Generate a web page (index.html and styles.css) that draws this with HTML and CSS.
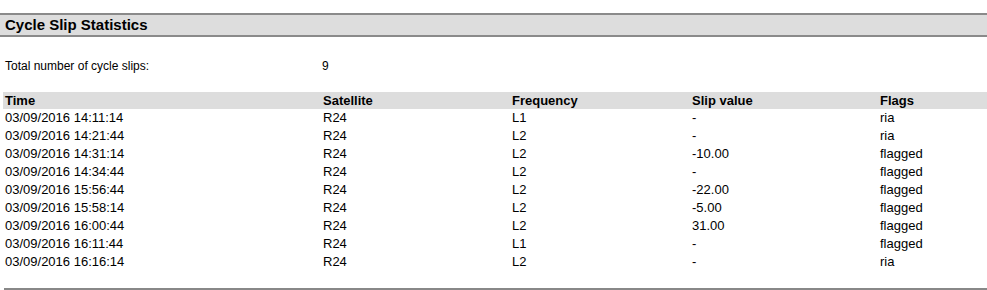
FILE: index.html
```html
<!DOCTYPE html>
<html>
<head>
<meta charset="utf-8">
<link rel="stylesheet" href="styles.css">
</head>
<body>
<h2 class="section-title">Cycle Slip Statistics</h2>
<div class="summary">
  <span class="summary-label">Total number of cycle slips:</span>
  <span class="summary-value">9</span>
</div>
<table class="slips">
  <colgroup>
    <col class="c-time"><col class="c-sat"><col class="c-freq"><col class="c-slip"><col class="c-flags">
  </colgroup>
  <thead>
    <tr><th>Time</th><th>Satellite</th><th>Frequency</th><th>Slip value</th><th>Flags</th></tr>
  </thead>
  <tbody>
    <tr><td>03/09/2016 14:11:14</td><td>R24</td><td>L1</td><td>-</td><td>ria</td></tr>
    <tr><td>03/09/2016 14:21:44</td><td>R24</td><td>L2</td><td>-</td><td>ria</td></tr>
    <tr><td>03/09/2016 14:31:14</td><td>R24</td><td>L2</td><td>-10.00</td><td>flagged</td></tr>
    <tr><td>03/09/2016 14:34:44</td><td>R24</td><td>L2</td><td>-</td><td>flagged</td></tr>
    <tr><td>03/09/2016 15:56:44</td><td>R24</td><td>L2</td><td>-22.00</td><td>flagged</td></tr>
    <tr><td>03/09/2016 15:58:14</td><td>R24</td><td>L2</td><td>-5.00</td><td>flagged</td></tr>
    <tr><td>03/09/2016 16:00:44</td><td>R24</td><td>L2</td><td>31.00</td><td>flagged</td></tr>
    <tr><td>03/09/2016 16:11:44</td><td>R24</td><td>L1</td><td>-</td><td>flagged</td></tr>
    <tr><td>03/09/2016 16:16:14</td><td>R24</td><td>L2</td><td>-</td><td>ria</td></tr>
  </tbody>
</table>
<hr class="rule">
</body>
</html>
```
FILE: styles.css
```css
html, body {
  margin: 0;
  padding: 0;
  background: #fff;
}
body {
  font-family: "Liberation Sans", Arial, sans-serif;
  font-size: 12px;
  color: #000;
  overflow: hidden;
}
.section-title {
  margin: 13px 0 0 0;
  height: 20px;
  line-height: 20px;
  padding: 0 5px;
  background: #dddddd;
  border-top: 2px solid #8a8a8a;
  border-bottom: 2px solid #8a8a8a;
  font-size: 15px;
  font-weight: bold;
  width: 1000px;
}
.summary {
  display: flex;
  margin-top: 22px;
  padding-left: 5px;
  height: 14px;
  line-height: 14px;
}
.summary-label {
  width: 317px;
}
.slips {
  margin: 19px 0 0 3px;
  border-collapse: collapse;
  table-layout: fixed;
  width: 984px;
  font-size: 13px;
}
.c-time { width: 318px; }
.c-sat { width: 189px; }
.c-freq { width: 180px; }
.c-slip { width: 188px; }
.c-flags { width: 109px; }
.slips th {
  background: #dddddd;
  text-align: left;
  font-weight: bold;
  height: 17px;
  padding: 0 2px;
  line-height: 17px;
}
.slips td {
  height: 18px;
  padding: 0 2px;
  line-height: 18px;
}
.rule {
  margin: 17px 0 0 4px;
  border: 0;
  border-top: 2px solid #888888;
  width: 1000px;
  height: 0;
}
```
